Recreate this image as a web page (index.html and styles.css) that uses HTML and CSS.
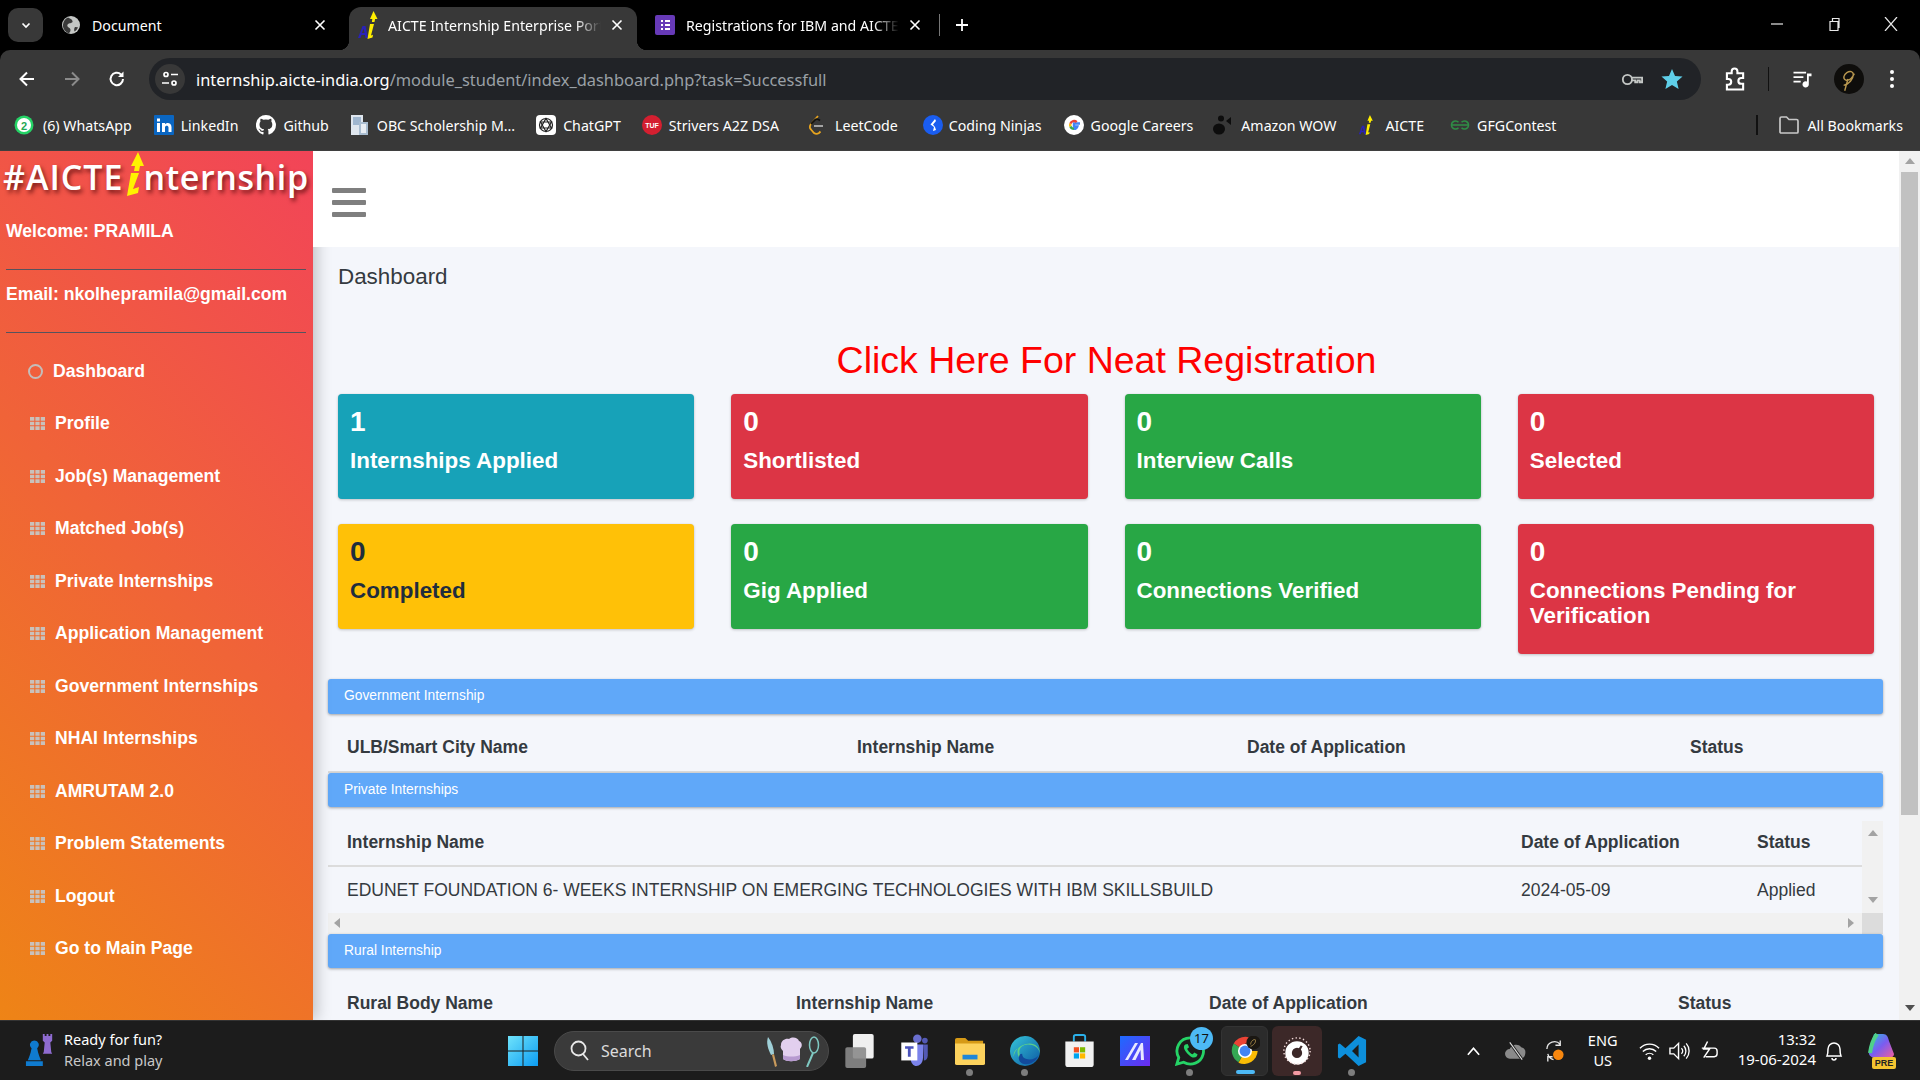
FILE: index.html
```html
<!DOCTYPE html>
<html lang="en">
<head>
<meta charset="utf-8">
<title>AICTE Internship Enterprise Portal</title>
<link rel="stylesheet" href="styles.css">
</head>
<body>
<svg class="defs" width="0" height="0" aria-hidden="true">
  <symbol id="th" viewBox="0 0 14 12"><path d="M0 0h4v3.400H0zM5 0h4v3.400H5zM10 0h4v3.400h-4zM0 4.300h4v3.400H0zM5 4.300h4v3.400H5zM10 4.300h4v3.400h-4zM0 8.600h4V12H0zM5 8.600h4V12H5zM10 8.600h4V12h-4z"/></symbol>
  <symbol id="ai" viewBox="0 0 20 28"><path d="M0 27 4.500 15h3L10 27H7.500l-.6-3H3.500l-1 3zM4 22h2.500L5.500 17.500z" fill="#2a22b8"/><path d="M15.500 0l4 8h-2.400l-.6 3h-2.600l.4-3H12zM12 13h4l-3 11.500 2-.7-.5 2.700-5 1.500z" fill="#ffee00"/></symbol>
  <symbol id="x" viewBox="0 0 12 12"><path d="M1.500 1.500l9 9M10.500 1.500l-9 9" fill="none" stroke="currentColor" stroke-width="1.600"/></symbol>
</svg>

<div class="browser">
  <div class="tabstrip">
    <button class="tab-search"><svg width="12" height="12" viewBox="0 0 12 12"><path d="M2.500 4.500 6 8l3.500-3.500" fill="none" stroke="#fff" stroke-width="1.700"/></svg></button>
    <div class="tab tab-doc">
      <svg class="tab-icon" viewBox="0 0 20 20"><circle cx="10" cy="10" r="9" fill="#c4c7c5"/><path d="M7 2.500c2 1 4 1.500 4.500 3.500s-2 2-3.500 2.500-2.500 2-1 3.500 2.500 1 2.500 3-1 2-1.500 3.500C4 17 1.500 13 2 9.500 2.500 6 4.500 3.500 7 2.500zM14 12c1 0 2 .5 3 0-.5 2-2 3.500-3.500 4.500-.5-1-.5-3.500.5-4.500z" fill="#3a3a3a"/></svg>
      <span class="tab-title">Document</span>
      <svg class="tab-x"><use href="#x"/></svg>
    </div>
    <div class="tab tab-active">
      <svg class="tab-icon tab-icon-ai"><use href="#ai"/></svg>
      <span class="tab-title tab-fade">AICTE Internship Enterprise Port</span>
      <svg class="tab-x"><use href="#x"/></svg>
    </div>
    <div class="tab tab-forms">
      <svg class="tab-icon" viewBox="0 0 20 20"><rect width="20" height="20" rx="2" fill="#673ab7"/><path d="M6 5h2v2H6zM10 5h5v2h-5zM6 9h2v2H6zM10 9h5v2h-5zM6 13h2v2H6zM10 13h5v2h-5z" fill="#fff"/></svg>
      <span class="tab-title tab-fade">Registrations for IBM and AICTE</span>
      <svg class="tab-x"><use href="#x"/></svg>
    </div>
    <span class="tab-sep"></span>
    <svg class="tab-plus" viewBox="0 0 14 14"><path d="M7 1v12M1 7h12" stroke="#fff" stroke-width="1.800"/></svg>
    <div class="win-ctrls">
      <svg viewBox="0 0 14 14"><path d="M1 7h12" stroke="#e8e8e8" stroke-width="1.200"/></svg>
      <svg viewBox="0 0 14 14"><path d="M3 4.500h8v9H3zM5.500 4.500V1.500h6.500v9H11" fill="none" stroke="#e8e8e8" stroke-width="1.200"/></svg>
      <svg viewBox="0 0 14 14"><path d="M1 0l12 14M13 0 1 14" stroke="#e8e8e8" stroke-width="1.200"/></svg>
    </div>
  </div>

  <div class="toolbar">
    <svg class="nav-ico" viewBox="0 0 20 20"><path d="M17 10H4M10 3.500 3.500 10l6.500 6.500" fill="none" stroke="#fff" stroke-width="2"/></svg>
    <svg class="nav-ico" viewBox="0 0 20 20"><path d="M3 10h13M10 3.500l6.500 6.500-6.500 6.500" fill="none" stroke="#8a8a8a" stroke-width="2"/></svg>
    <svg class="nav-ico" viewBox="0 0 20 20"><path d="M16 10a6.200 6.200 0 1 1-2-4.600" fill="none" stroke="#fff" stroke-width="2"/><path d="M16.500 2.500v5.500H11z" fill="#fff"/></svg>
    <div class="omnibox">
      <span class="site-info"><svg width="18" height="18" viewBox="0 0 18 18"><g fill="none" stroke="#fff" stroke-width="1.700"><circle cx="5" cy="4.500" r="2"/><path d="M10 4.500h7M1 13h7"/><circle cx="13" cy="13" r="2"/></g></svg></span>
      <span class="url"><span class="url-host">internship.aicte-india.org</span>/module_student/index_dashboard.php?task=Successfull</span>
      <svg class="omni-key" viewBox="0 0 24 14"><g fill="none" stroke="#c4c7c5" stroke-width="2"><circle cx="7" cy="7" r="5"/><path d="M12 5h11v5h-2.500V8H18v2h-2.500V8H12"/></g></svg>
      <svg class="omni-star" viewBox="0 0 24 24"><path d="M12 1l3.300 7.600 8.200.8-6.200 5.400 1.900 8.100L12 18.600l-7.200 4.300 1.900-8.100L.5 9.400l8.200-.8z" fill="#5fcfe9"/></svg>
    </div>
    <svg class="tb-ext" viewBox="0 0 22 24"><path d="M2 6h5V4a3 3 0 0 1 6 0v2h6v5h-2a3 3 0 0 0 0 6h2v6H2v-5h1.500a3 3 0 0 0 0-6H2z" fill="none" stroke="#fff" stroke-width="2.200"/></svg>
    <span class="tb-sep"></span>
    <svg class="tb-media" viewBox="0 0 22 20"><path d="M1 2h14v2H1zM1 7h11v2H1zM1 12h8v2H1zM16 4h5v3h-3v9a3.500 3.500 0 1 1-2-3.200z" fill="#fff"/></svg>
    <svg class="tb-avatar" viewBox="0 0 28 28"><circle cx="14" cy="14" r="14" fill="#0e0d0b"/><path d="M9 20c5-1 9-6 9-10 0-3-3-4-6-2s-4 6-1 7 6-2 8-6M13 14l-3 11" fill="none" stroke="#b8974f" stroke-width="1.300"/></svg>
    <svg class="tb-dots" viewBox="0 0 4 18"><circle cx="2" cy="2" r="2" fill="#fff"/><circle cx="2" cy="9" r="2" fill="#fff"/><circle cx="2" cy="16" r="2" fill="#fff"/></svg>
  </div>

  <div class="bookmarks">
    <a class="bm bm-wa"><svg viewBox="0 0 20 20"><circle cx="10" cy="10" r="9.500" fill="#25d366"/><circle cx="10" cy="10" r="7" fill="#fff"/><text x="10" y="14.500" class="bm-num">2</text></svg>(6) WhatsApp</a>
    <a class="bm bm-li"><svg viewBox="0 0 20 20"><rect width="20" height="20" rx="1" fill="#0a66c2"/><path d="M3 8h3v9H3zM3 3.500h3v3H3zM8 8h3v1.300c1-2 6.500-2.500 6.500 2.700v5h-3v-4.500c0-2.500-3.500-2.500-3.500 0V17H8z" fill="#fff"/></svg>LinkedIn</a>
    <a class="bm bm-gh"><svg viewBox="0 0 20 20"><path d="M10 0a10 10 0 0 0-3.200 19.500c.5.100.7-.2.700-.5v-2c-2.800.6-3.400-1.200-3.400-1.200-.4-1.100-1.100-1.500-1.100-1.500-.9-.6.100-.6.100-.6 1 .1 1.500 1 1.500 1 .9 1.500 2.300 1.100 2.900.8.100-.6.300-1.100.6-1.300-2.200-.3-4.600-1.100-4.600-5 0-1.100.4-2 1-2.700-.1-.3-.4-1.300.1-2.700 0 0 .8-.3 2.800 1a9.500 9.500 0 0 1 5 0c1.900-1.300 2.800-1 2.800-1 .5 1.400.2 2.400.1 2.700.6.700 1 1.600 1 2.700 0 3.900-2.300 4.700-4.600 5 .4.300.7.900.7 1.900V19c0 .3.200.6.700.5A10 10 0 0 0 10 0z" fill="#fff"/></svg>Github</a>
    <a class="bm bm-obc"><svg viewBox="0 0 20 20"><path d="M1 0h12v20H1z" fill="#dfe6ee"/><path d="M3 2h8v8H3z" fill="#9fb6cf"/><path d="M9 7h9v13H9z" fill="#a9bdd1"/><path d="M11 9h5v9h-5z" fill="#e9eef4"/></svg>OBC Scholership M...</a>
    <a class="bm bm-gpt"><svg viewBox="0 0 20 20"><rect width="20" height="20" rx="4" fill="#fff"/><g fill="none" stroke="#222" stroke-width="1.200"><circle cx="10" cy="10" r="6.500"/><path d="M10 3.500 15.500 13 4.500 13zM10 16.500 4.500 7h11z"/></g></svg>ChatGPT</a>
    <a class="bm bm-tuf"><svg viewBox="0 0 20 20"><circle cx="10" cy="10" r="10" fill="#d41f30"/><text x="10" y="12.800" class="bm-tuf-t">TUF</text></svg>Strivers A2Z DSA</a>
    <a class="bm bm-lc"><svg viewBox="0 0 20 20"><path d="M12 1 5 9c-1.500 2-1.500 4 0 5.500l3 3.500c1.500 1 3.500 1 5 0l1.500-1.500" fill="none" stroke="#e7a41f" stroke-width="1.800"/><path d="M8 11h9" stroke="#b0b0b0" stroke-width="1.800"/><path d="M5 9l4-4c1-1 3-1 5 .5" fill="none" stroke="#111" stroke-width="1.800"/></svg>LeetCode</a>
    <a class="bm bm-cn"><svg viewBox="0 0 20 20"><circle cx="10" cy="10" r="10" fill="#1a5df0"/><path d="M12 4 7.500 9.500 11 12l-1 4 3-1-1-3-2-2.500L13 6z" fill="#fff"/></svg>Coding Ninjas</a>
    <a class="bm bm-goog"><svg viewBox="0 0 20 20"><circle cx="10" cy="10" r="10" fill="#fff"/><path d="M16 8.500h-6v3h3.300c-.5 1.500-1.800 2.300-3.300 2.300" fill="none" stroke="#4285f4" stroke-width="2.400"/><path d="M10 13.800A3.800 3.800 0 0 1 6.400 11.300" fill="none" stroke="#34a853" stroke-width="2.400"/><path d="M6.400 11.300a3.900 3.900 0 0 1 0-2.600" fill="none" stroke="#fbbc05" stroke-width="2.400"/><path d="M6.400 8.700A3.800 3.800 0 0 1 12.700 7.200" fill="none" stroke="#ea4335" stroke-width="2.400"/></svg>Google Careers</a>
    <a class="bm bm-amz"><svg viewBox="0 0 20 20"><ellipse cx="7" cy="14" rx="6" ry="5.500" fill="#0d0d0d"/><circle cx="9" cy="3.500" r="3" fill="#0d0d0d"/><path d="M19 2v8l-5-4z" fill="#0d0d0d"/></svg>Amazon WOW</a>
    <a class="bm bm-aicte"><svg><use href="#ai"/></svg>AICTE</a>
    <a class="bm bm-gfg"><svg viewBox="0 0 20 12"><g fill="none" stroke="#2f8d46" stroke-width="1.500"><path d="M10 6H1.500a4 4 0 0 1 7-2.700M10 6h8.500a4 4 0 0 0-7-2.700M8.500 8.700A4 4 0 0 1 1.500 6M11.500 8.700A4 4 0 0 0 18.500 6"/></g></svg>GFGContest</a>
    <span class="bm-sep"></span>
    <a class="bm bm-all"><svg viewBox="0 0 20 18"><path d="M1 16V2.500C1 1.700 1.700 1 2.500 1h5l2.500 2.500h7.500c.8 0 1.500.7 1.500 1.500v11c0 .6-.5 1-1 1H2c-.5 0-1-.4-1-1z" fill="none" stroke="#c7c7c7" stroke-width="1.700"/></svg>All Bookmarks</a>
  </div>
</div>

<div class="viewport">
  <aside class="sidebar">
    <div class="logo">#AICTE<svg class="logo-i" viewBox="0 0 20 44"><path d="M13 0l6 14h-4l-1 5H9l1-5H6zM6 21h8L8 37l6-2-1 6-11 3z" fill="#fff200"/></svg><span class="logo-rest">nternship</span></div>
    <p class="user-line user-welcome">Welcome: PRAMILA</p>
    <hr class="user-rule">
    <p class="user-line">Email: nkolhepramila@gmail.com</p>
    <hr class="user-rule">
    <nav class="menu">
      <a class="menu-item"><span class="menu-ring"></span>Dashboard</a>
      <a class="menu-item"><svg class="menu-ico"><use href="#th"/></svg>Profile</a>
      <a class="menu-item"><svg class="menu-ico"><use href="#th"/></svg>Job(s) Management</a>
      <a class="menu-item"><svg class="menu-ico"><use href="#th"/></svg>Matched Job(s)</a>
      <a class="menu-item"><svg class="menu-ico"><use href="#th"/></svg>Private Internships</a>
      <a class="menu-item"><svg class="menu-ico"><use href="#th"/></svg>Application Management</a>
      <a class="menu-item"><svg class="menu-ico"><use href="#th"/></svg>Government Internships</a>
      <a class="menu-item"><svg class="menu-ico"><use href="#th"/></svg>NHAI Internships</a>
      <a class="menu-item"><svg class="menu-ico"><use href="#th"/></svg>AMRUTAM 2.0</a>
      <a class="menu-item"><svg class="menu-ico"><use href="#th"/></svg>Problem Statements</a>
      <a class="menu-item"><svg class="menu-ico"><use href="#th"/></svg>Logout</a>
      <a class="menu-item"><svg class="menu-ico"><use href="#th"/></svg>Go to Main Page</a>
    </nav>
  </aside>

  <main class="main">
    <header class="topbar">
      <span class="burger"><i></i><i></i><i></i></span>
    </header>
    <div class="content">
      <h1 class="page-title">Dashboard</h1>
      <h2 class="neat-link">Click Here For Neat Registration</h2>
      <div class="cards">
        <div class="card card-info"><h3>1</h3><p>Internships Applied</p></div>
        <div class="card card-danger"><h3>0</h3><p>Shortlisted</p></div>
        <div class="card card-success"><h3>0</h3><p>Interview Calls</p></div>
        <div class="card card-danger"><h3>0</h3><p>Selected</p></div>
        <div class="card card-warning"><h3>0</h3><p>Completed</p></div>
        <div class="card card-success"><h3>0</h3><p>Gig Applied</p></div>
        <div class="card card-success"><h3>0</h3><p>Connections Verified</p></div>
        <div class="card card-danger"><h3>0</h3><p>Connections Pending for Verification</p></div>
      </div>

      <section class="panel">
        <div class="panel-bar panel-bar-first">Government Internship</div>
        <div class="t-row t-head t-gov"><span>ULB/Smart City Name</span><span>Internship Name</span><span>Date of Application</span><span>Status</span></div>
      </section>

      <section class="panel">
        <div class="panel-bar">Private Internships</div>
        <div class="scrollbox">
          <div class="scroll-area">
            <div class="t-row t-head t-private t-private-head"><span>Internship Name</span><span>Date of Application</span><span>Status</span></div>
            <div class="t-row t-private t-cell"><span>EDUNET FOUNDATION 6- WEEKS INTERNSHIP ON EMERGING TECHNOLOGIES WITH IBM SKILLSBUILD</span><span>2024-05-09</span><span>Applied</span></div>
          </div>
          <div class="vbar"><i class="arr arr-up"></i><i class="arr arr-down"></i></div>
          <div class="hbar"><i class="arr arr-left"></i><i class="arr arr-right"></i></div>
          <div class="corner"></div>
        </div>
      </section>

      <section class="panel">
        <div class="panel-bar">Rural Internship</div>
        <div class="t-row t-head t-rural"><span>Rural Body Name</span><span>Internship Name</span><span>Date of Application</span><span>Status</span></div>
      </section>
    </div>
  </main>

  <div class="page-scroll">
    <i class="arr arr-up arr-page"></i>
    <span class="page-thumb"></span>
    <i class="arr arr-down arr-page arr-dark"></i>
  </div>
</div>

<footer class="taskbar">
  <div class="widget">
    <svg class="widget-ico" viewBox="0 0 32 36"><path d="M10 8a4.500 4.500 0 0 1 3 8c1 6 3 10 4 13H3c1-3 3-7 4-13a4.500 4.500 0 0 1 3-8zM1 30h18v5H1z" fill="#0f7bd0"/><path d="M19 1h2v2h2V1h2v2h2V1h2v7l-2 2 1 10 1 2H19l1-2 1-10-2-2z" fill="#8e6bd0"/></svg>
    <div class="widget-text"><span>Ready for fun?</span><span class="widget-sub">Relax and play</span></div>
  </div>

  <div class="tasks">
    <div class="slot slot-start"><svg viewBox="0 0 30 30" class="ico-30"><defs><linearGradient id="w" x1="0" y1="0" x2="1" y2="1"><stop offset="0" stop-color="#6fe3fb"/><stop offset="1" stop-color="#0c9cf2"/></linearGradient></defs><path d="M0 0h14.500v14.500H0zM15.500 0H30v14.500H15.500zM0 15.500h14.500V30H0zM15.500 15.500H30V30H15.500z" fill="url(#w)"/></svg></div>
    <div class="search">
      <svg width="20" height="22" viewBox="0 0 20 22"><circle cx="8.500" cy="8.500" r="7" fill="none" stroke="#e8e8e8" stroke-width="1.800"/><path d="M13 14l5 6" stroke="#e8e8e8" stroke-width="1.800"/></svg>
      <span class="search-label">Search</span>
      <svg class="search-art" viewBox="0 0 54 32"><path d="M2 2c4 5 6 12 6 17l-3 1C2 14 0 8 2 2z" fill="#9fd0d8"/><path d="M6 20l2-1 3 12-2 1z" fill="#c99a5c"/><path d="M15 10c0-5 5-7 8-6 4-3 9-1 10 2 3 1 4 5 1 8v10c-5 3-13 3-17 0V16c-2-2-3-4-2-6z" fill="#e2cfee"/><path d="M17 20c5 2 12 2 17 0v4c-5 3-13 3-17 0z" fill="#b79ad0"/><ellipse cx="48" cy="10" rx="4.500" ry="8" fill="none" stroke="#7fc9c2" stroke-width="1.500"/><path d="M47 18 41 32" stroke="#7fc9c2" stroke-width="2"/></svg>
    </div>
    <div class="slot"><svg viewBox="0 0 30 36" class="ico-taskview"><rect x="8" y="0" width="22" height="26" rx="2" fill="#f0f0f0"/><rect x="0" y="14" width="22" height="22" rx="2" fill="#8a8a8a" fill-opacity=".9"/></svg></div>
    <div class="slot"><svg viewBox="0 0 28 36" class="ico-teams"><circle cx="17" cy="5" r="4.500" fill="#6a6fd0"/><circle cx="25" cy="7" r="3" fill="#5359b5"/><path d="M10 11h13v14c0 6-4 9-7 9s-6-3-6-8z" fill="#7b83eb"/><path d="M23 11h5v12c0 3-2 5-4 5z" fill="#5359b5"/><rect x="0" y="9" width="17" height="19" fill="#fff"/><path d="M4 13h9v2.500H10V24H7v-8.500H4z" fill="#4b53bc"/></svg></div>
    <div class="slot slot-dot"><svg viewBox="0 0 32 30" class="ico-30"><path d="M0 3a2 2 0 0 1 2-2h9l3 3h16v6H0z" fill="#d69a16"/><path d="M0 7h32v21a2 2 0 0 1-2 2H2a2 2 0 0 1-2-2z" fill="#fcd25d"/><rect x="8" y="19" width="16" height="5" fill="#1c86d8"/></svg></div>
    <div class="slot slot-dot"><svg viewBox="0 0 32 32" class="ico-30"><defs><linearGradient id="e" x1="0" y1="0" x2="1" y2="1"><stop offset="0" stop-color="#36c6d8"/><stop offset="1" stop-color="#0c59a4"/></linearGradient></defs><circle cx="16" cy="16" r="16" fill="url(#e)"/><path d="M32 19c-1-7-7-10-13-10-5 0-9 3-9 8 0 6 6 10 13 9-8 3-15-2-15-9 0-2 .5-3 1-4-3 1-6 5-5 9 1-8 9-14 17-14 6 0 11 4 11 11z" fill="#6ce07a" fill-opacity=".8"/><path d="M13 19c0 4 3 6 8 6 4 0 7-2 9-4-2 6-8 9-13 9-6 0-9-5-7-9 0-1 1-2 3-2z" fill="#124a9c"/></svg></div>
    <div class="slot"><svg viewBox="0 0 30 36" class="ico-store"><path d="M9 8V3a2 2 0 0 1 2-2h8a2 2 0 0 1 2 2v5" fill="none" stroke="#2ab0ea" stroke-width="2"/><path d="M0 8h30v24a3 3 0 0 1-3 3H3a3 3 0 0 1-3-3z" fill="#f1f1f1"/><path d="M9 14h5.500v5.500H9z" fill="#f25022"/><path d="M15.500 14H21v5.500h-5.500z" fill="#7fba00"/><path d="M9 20.500h5.500V26H9z" fill="#00a4ef"/><path d="M15.500 20.500H21V26h-5.500z" fill="#ffb900"/></svg></div>
    <div class="slot"><svg viewBox="0 0 30 30" class="ico-30"><defs><linearGradient id="m" x1="0" y1="0" x2="1" y2="1"><stop offset="0" stop-color="#1d6bff"/><stop offset="1" stop-color="#6d2bf0"/></linearGradient></defs><rect width="30" height="30" fill="url(#m)"/><path d="M5 24 15 7h3L8 24zM12 24l9-17h2l1 17h-3l-.5-10-5 10z" fill="#e9e9ff"/></svg></div>
    <div class="slot slot-dot"><svg viewBox="0 0 32 32" class="ico-30"><path d="M16 2a14 14 0 0 0-12 21L2 30l7.200-2A14 14 0 1 0 16 2z" fill="none" stroke="#25d366" stroke-width="3"/><path d="M11 9c-2 1-2 4 0 7s6 7 9 7 4-2 4-3.500l-3.500-2-1.500 2c-2-.5-5-3.500-6-6l2-1.500-1.500-3.500z" fill="#25d366"/></svg><span class="wa-badge">17</span></div>
    <div class="slot slot-chrome"><svg viewBox="0 0 32 32" class="ico-30"><path d="M16 16 4 8a14.500 14.500 0 0 1 25 0H16z" fill="#ea4335"/><path d="M16 16 9 28A14.500 14.500 0 0 1 4 8z" fill="#34a853"/><path d="M16 16h13.500A14.500 14.500 0 0 1 9 28.500z" fill="#fbbc05"/><circle cx="16" cy="16" r="7.500" fill="#fff"/><circle cx="16" cy="16" r="5.800" fill="#4285f4"/><circle cx="25" cy="7" r="7.500" fill="#1a1712"/><path d="M22 11c3-1 6-4 5-7-2-1-5 2-5 5" fill="none" stroke="#a78a4a" stroke-width="1"/></svg><span class="run-bar"></span></div>
    <div class="slot slot-dial"><svg viewBox="0 0 32 32" class="ico-30"><circle cx="16" cy="18" r="9" fill="none" stroke="#fff" stroke-width="7"/><path d="M16 16l4-6 2 1-4 7z" fill="#3c2828"/><circle cx="16" cy="16" r="14" fill="none" stroke="#f2d9d9" stroke-width="1.500" stroke-dasharray="1.500 2.500"/></svg><span class="run-pink"></span></div>
    <div class="slot slot-dot"><svg viewBox="0 0 30 32" class="ico-30"><path d="M22 0l8 4v24l-8 4-14-13-6 5-2-1V9l2-1 6 5zm0 9-7 7 7 7z" fill="#0d8fdb"/></svg></div>
  </div>

  <div class="tray">
    <svg class="tray-caret" viewBox="0 0 16 10"><path d="M2 9l6-7 6 7" fill="none" stroke="#fff" stroke-width="1.800"/></svg>
    <svg class="tray-cloud" viewBox="0 0 22 18"><path d="M5 17a5 5 0 0 1 0-10c1-4 8-7 12-2 4 1 5 4 4 8-.5 2-2 4-4 4z" fill="#8a8a8a"/><path d="M5 0l13 18" stroke="#1c1c1c" stroke-width="3"/><path d="M5 0l13 18" stroke="#e0e0e0" stroke-width="1.100"/></svg>
    <svg class="tray-sync" viewBox="0 0 22 24"><path d="M3 10a8 8 0 0 1 14-5M17 1v5h-5M4 15a8 8 0 0 0 6 6M4 23v-5h5" fill="none" stroke="#e8e8e8" stroke-width="1.400"/><circle cx="15" cy="16" r="5.500" fill="#f7870f"/></svg>
    <div class="tray-lang"><span>ENG</span><span>US</span></div>
    <svg class="tray-wifi" viewBox="0 0 22 20"><g fill="none" stroke="#fff" stroke-width="1.500"><path d="M1 7a14 14 0 0 1 20 0M4 10.500a10 10 0 0 1 14 0M7 14a6 6 0 0 1 8 0"/></g><circle cx="11" cy="17.500" r="1.800" fill="#fff"/></svg>
    <svg class="tray-vol" viewBox="0 0 22 20"><path d="M1 7h4l5-5v16l-5-5H1z" fill="none" stroke="#fff" stroke-width="1.500"/><path d="M13 7a4 4 0 0 1 0 6M15.500 4.500a8 8 0 0 1 0 11M18 2a12 12 0 0 1 0 16" fill="none" stroke="#fff" stroke-width="1.400"/></svg>
    <svg class="tray-batt" viewBox="0 0 22 22"><path d="M4 8h13a3 3 0 0 1 3 3v3a3 3 0 0 1-3 3H8M10 1 6 9h6l-6 9" fill="none" stroke="#fff" stroke-width="1.500"/></svg>
    <div class="tray-clock"><span>13:32</span><span>19-06-2024</span></div>
    <svg class="tray-bell" viewBox="0 0 18 22"><path d="M2 16c1-2 1-4 1-7a6 6 0 0 1 12 0c0 3 0 5 1 7zM7 18a2 2 0 0 0 4 0" fill="none" stroke="#fff" stroke-width="1.500"/></svg>
    <div class="copilot"><svg viewBox="0 0 30 28"><defs><linearGradient id="c" x1="0" y1="0" x2="1" y2="1"><stop offset="0" stop-color="#28c0e0"/><stop offset=".5" stop-color="#7a5cf0"/><stop offset="1" stop-color="#f35f9b"/></linearGradient></defs><path d="M8 1h9c4 0 5 3 6 7l5 13c0 2-2 4-5 4H10c-5 0-8-3-7-7z" fill="url(#c)"/><path d="M11 1c-3 4-6 12-7 19" stroke="#4fd08a" stroke-width="4" fill="none"/></svg><span class="pre">PRE</span></div>
  </div>
</footer>
</body>
</html>
```

FILE: styles.css
```css
* { box-sizing: border-box; }
html, body { margin: 0; height: 100%; overflow: hidden; }
body {
  display: flex;
  flex-direction: column;
  height: 1080px;
  font-family: "Liberation Sans", Arial, sans-serif;
  color: #212529;
  background: #000;
}
.defs { position: absolute; }

/* browser chrome */
.browser { flex: 0 0 151px; display: flex; flex-direction: column; font-family: "Noto Sans", sans-serif; color: #fff; border-bottom: 1px solid #3f3f3f; background: #000; }
.tabstrip { flex: 0 0 50px; display: flex; align-items: flex-end; background: #000; }
.tab-search { flex: 0 0 35px; height: 34px; margin: 0 0 8px 8px; padding: 0; border: 0; border-radius: 10px; background: #383838; display: flex; align-items: center; justify-content: center; }
.tab { height: 43px; min-width: 0; display: flex; align-items: center; position: relative; font-size: 14.200px; }
.tab-doc { flex: 0 0 306px; padding: 0 23px 7px 18px; }
.tab-active { flex: 0 0 288px; padding: 0 14px 7px 9px; background: #383838; border-radius: 12px 12px 0 0; }
.tab-active::before, .tab-active::after { content: ""; position: absolute; bottom: 0; width: 10px; height: 10px; }
.tab-active::before { left: -10px; background: radial-gradient(circle at 0 0, #000 10px, #383838 10.500px); }
.tab-active::after { right: -10px; background: radial-gradient(circle at 100% 0, #000 10px, #383838 10.500px); }
.tab-forms { flex: 0 0 296px; padding: 0 12px 7px 18px; }
.tab-icon { width: 20px; height: 20px; flex: 0 0 20px; margin-right: 11px; }
.tab-icon-ai { width: 20px; height: 28px; margin-right: 10px; }
.tab-title { flex: 1; min-width: 0; white-space: nowrap; overflow: hidden; }
.tab-fade { -webkit-mask-image: linear-gradient(to right, #000 88%, transparent 100%); mask-image: linear-gradient(to right, #000 88%, transparent 100%); }
.tab-x { flex: 0 0 12px; width: 12px; height: 12px; margin-left: 10px; color: #fff; }
.tab-sep { width: 1px; height: 22px; background: #777; margin: 0 0 14px 6px; }
.tab-plus { width: 14px; height: 14px; margin: 0 0 18px 15px; }
.win-ctrls { margin-left: auto; display: flex; gap: 43px; padding: 0 22px 19px 0; }
.win-ctrls svg { width: 14px; height: 14px; }

.toolbar { flex: 0 0 50px; display: flex; align-items: center; background: #383838; border-radius: 10px 10px 0 0; padding: 8px 0 0 17px; }
.nav-ico { width: 20px; height: 20px; margin-right: 25px; }
.nav-ico:nth-child(3) { margin-right: 22px; }
.omnibox { flex: 0 0 1552px; height: 42px; background: #212327; border-radius: 21px; display: flex; align-items: center; padding: 0 18px 0 6px; }
.site-info { width: 30px; height: 30px; border-radius: 50%; background: #383838; display: flex; align-items: center; justify-content: center; }
.url { flex: 1; margin-left: 11px; font-size: 16.400px; color: #9aa0a6; white-space: nowrap; }
.url-host { color: #fff; }
.omni-key { width: 22px; height: 13px; margin-right: 18px; }
.omni-star { width: 22px; height: 22px; }
.tb-ext { width: 21px; height: 24px; margin-left: 24px; }
.tb-sep { width: 1px; height: 24px; background: #111; margin-left: 22px; }
.tb-media { width: 21px; height: 18px; margin-left: 23px; }
.tb-avatar { width: 30px; height: 30px; margin-left: 21px; }
.tb-dots { width: 4px; height: 18px; margin-left: 26px; }

.bookmarks { flex: 1; display: flex; align-items: center; background: #383838; padding-left: 14px; font-size: 14.200px; white-space: nowrap; }
.bm { display: flex; align-items: center; gap: 7px; margin-right: 21px; }
.bm svg { width: 20px; height: 20px; flex: 0 0 20px; }
.bm-wa { gap: 9px; margin-right: 22px; }
.bm-li { margin-right: 18px; }
.bm-tuf { margin-right: 27px; }
.bm-lc { gap: 9px; margin-right: 25px; }
.bm-cn { gap: 6px; margin-right: 22px; }
.bm-goog { margin-right: 19px; }
.bm-amz { gap: 9px; margin-right: 20px; }
.bm-aicte { gap: 9px; margin-right: 26px; }
.bm-num { font: bold 11px "Liberation Sans", sans-serif; text-anchor: middle; fill: #25a855; }
.bm-tuf-t { font: bold 7px "Liberation Sans", sans-serif; text-anchor: middle; fill: #fff; }
.bm-sep { width: 2px; height: 20px; background: #111; margin-left: auto; }
.bm-all { gap: 9px; margin: 0 17px 0 21px; }

/* page */
.viewport { flex: 1; min-height: 0; display: flex; overflow: hidden; background: #f4f6fb; }
.sidebar { flex: 0 0 313px; position: relative; z-index: 1; background: linear-gradient(45deg, #ee8416, #f24458); box-shadow: 4px 0 14px rgba(0, 0, 0, .22); color: #fff; overflow: hidden; }
.logo { height: 64px; padding: 0 0 0 3px; display: flex; align-items: flex-start; font: 600 34px/52px "Open Sans", sans-serif; letter-spacing: 1px; color: #fff; text-shadow: 2px 3px 4px rgba(80, 10, 10, .75); white-space: nowrap; }
.logo-i { width: 22px; height: 44px; flex: 0 0 22px; margin: 1px -2px 0 0; }
.logo-rest { letter-spacing: .6px; }
.user-line { margin: 0; padding-left: 6px; font-size: 17.600px; font-weight: 700; line-height: 24px; }
.user-welcome { padding-top: 4px; }
.user-rule { margin: 26px 7px 12px 6px; border: 0; border-top: 1px solid #56535d; }
.menu { display: flex; flex-direction: column; margin-top: 11px; }
.menu-item { height: 52.500px; display: flex; align-items: center; padding-left: 30px; font-size: 17.600px; font-weight: 700; color: #fff; white-space: nowrap; }
.menu-ico { width: 15px; height: 13px; margin-right: 10px; fill: #c9c1bb; }
.menu-ring { width: 15px; height: 15px; margin: 0 10px 0 -2px; border: 2px solid #c4bdba; border-radius: 50%; }

.main { flex: 1; min-width: 0; overflow: hidden; display: flex; flex-direction: column; }
.topbar { flex: 0 0 96px; position: relative; z-index: 2; background: #fff; display: flex; align-items: center; padding: 6px 0 0 19px; }
.burger { display: flex; flex-direction: column; gap: 7px; width: 34px; }
.burger i { height: 5px; background: #7f7f7f; border-radius: 1px; }
.content { flex: 1; padding: 0 16px 0 15px; }
.page-title { margin: 0; padding: 15px 0 0 10px; font-size: 22.400px; font-weight: 400; line-height: 30px; color: #343a40; }
.neat-link { margin: 44px 0 0 0; text-align: center; font-size: 37.500px; font-weight: 400; line-height: 48px; color: #f00; padding-left: 2px; }
.cards { display: grid; grid-template-columns: repeat(4, 1fr); gap: 25px 37px; align-items: start; margin: 10px 9px 0 10px; }
.card { border-radius: 4px; padding: 10px 12px 26px; color: #fff; box-shadow: 0 0 1px rgba(0, 0, 0, .125), 0 1px 3px rgba(0, 0, 0, .2); }
.card h3 { margin: 0; font-size: 28px; font-weight: 700; line-height: 36px; }
.card p { margin: 8px 0 0; font-size: 22.400px; font-weight: 700; line-height: 25px; }
.card-info { background: #17a2b8; }
.card-danger { background: #dc3545; }
.card-success { background: #28a745; }
.card-warning { background: #ffc107; color: #1f2d3d; }

.panel { display: flex; flex-direction: column; }
.panel-bar { flex: 0 0 34.500px; background: #60a8f9; border-radius: 3px; padding: 0 0 1px 16px; display: flex; align-items: center; color: #fff; font-size: 13.800px; box-shadow: 0 1px 3px rgba(0, 0, 0, .35); }
.panel-bar-first { margin-top: 25px; }
.t-row { display: grid; align-items: center; padding-left: 19px; color: #343a40; font-size: 17.500px; }
.t-head { font-weight: 700; height: 59px; padding-top: 10px; border-bottom: 2px solid #dcdcdc; white-space: nowrap; }
.t-gov { grid-template-columns: 510px 390px 443px 1fr; }
.t-private { grid-template-columns: 1174px 236px 1fr; }
.t-rural { grid-template-columns: 449px 413px 469px 1fr; border-bottom: 0; padding-top: 11px; }
.t-private-head { height: 46px; padding-top: 0; }
.t-cell { height: 46px; padding-top: 2px; white-space: nowrap; }
.scrollbox { display: grid; grid-template-columns: 1fr 21px; grid-template-rows: 92px 21px; margin-top: 13.500px; }
.scroll-area { overflow: hidden; }
.vbar { background: #f1f1f1; display: flex; flex-direction: column; align-items: center; justify-content: space-between; padding: 9px 0 10px; }
.hbar { background: #f1f1f1; display: flex; align-items: center; justify-content: space-between; padding: 0 8px 0 6px; }
.corner { background: #dcdcdc; }
.arr { display: block; width: 0; height: 0; border-style: solid; border-color: transparent; }
.arr-up { border-width: 0 5px 6px; border-bottom-color: #a3a3a3; }
.arr-down { border-width: 6px 5px 0; border-top-color: #a3a3a3; }
.arr-left { border-width: 5px 6px 5px 0; border-right-color: #a3a3a3; }
.arr-right { border-width: 5px 0 5px 6px; border-left-color: #a3a3a3; }
.page-scroll { flex: 0 0 21px; background: #f1f1f1; display: flex; flex-direction: column; align-items: center; padding: 7px 0 9px; position: relative; z-index: 2; }
.page-thumb { width: 17px; height: 643px; margin-top: 8px; background: #c1c1c1; }
.arr-page { flex: 0 0 auto; }
.arr-dark { margin-top: auto; border-top-color: #505050; }

/* taskbar */
.taskbar { flex: 0 0 60px; display: flex; align-items: center; background: #1c1c1c; border-top: 1px solid #333; color: #fff; font-family: "Noto Sans", sans-serif; position: relative; }
.widget { flex: 0 0 495px; display: flex; align-items: center; padding: 0 0 2px 25px; }
.widget-ico { width: 30px; height: 34px; margin-right: 9px; }
.widget-text { display: flex; flex-direction: column; font-size: 14.500px; line-height: 21px; }
.widget-sub { color: #c8c8c8; }
.tasks { display: flex; align-items: center; height: 100%; }
.slot { flex: 0 0 55px; height: 48px; display: flex; align-items: center; justify-content: center; position: relative; border-radius: 6px; }
.slot-start { margin-right: 4px; }
.ico-30 { width: 30px; height: 30px; }
.ico-taskview { width: 29px; height: 34px; }
.ico-teams { width: 27px; height: 34px; }
.ico-store { width: 29px; height: 34px; }
.slot-dot::after { content: ""; position: absolute; left: 24px; bottom: -1px; width: 7px; height: 7px; border-radius: 50%; background: #7d7d7d; }
.search { flex: 0 0 275px; height: 40px; margin-right: 3px; border-radius: 20px; background: #3a3a3a; border: 1px solid #4a4a4a; display: flex; align-items: center; padding: 0 8px 0 15px; }
.search-label { flex: 1; margin-left: 11px; font-size: 16px; color: #dcdcdc; }
.search-art { width: 54px; height: 32px; }
.wa-badge { position: absolute; top: 0; left: 28px; width: 23px; height: 23px; border-radius: 50%; background: #4db9f5; color: #111; font-size: 13px; line-height: 23px; text-align: center; }
.slot-chrome { flex: 0 0 47px; height: 50px; margin: 0 4px; background: #2b2b2b; border: 1px solid #333; }
.slot-dial { flex: 0 0 50px; height: 50px; margin-right: 2px; background: #3c2828; }
.run-bar { position: absolute; left: 14px; bottom: 1px; width: 19px; height: 4px; border-radius: 2px; background: #4db9f5; }
.run-pink { position: absolute; left: 21px; bottom: 1px; width: 8px; height: 4px; border-radius: 2px; background: #f29aa3; }
.tray { margin-left: auto; display: flex; align-items: center; height: 100%; }
.tray-caret { width: 15px; height: 10px; margin-right: 24px; }
.tray-cloud { width: 21px; height: 18px; margin-right: 18px; }
.tray-sync { width: 21px; height: 24px; margin-right: 20px; }
.tray-lang { width: 36px; display: flex; flex-direction: column; align-items: center; font-size: 14.500px; line-height: 20px; margin: 0 18px 2px 0; }
.tray-wifi { width: 21px; height: 20px; margin-right: 9px; }
.tray-vol { width: 21px; height: 20px; margin-right: 8px; }
.tray-batt { width: 21px; height: 22px; margin-right: 19px; }
.tray-clock { display: flex; flex-direction: column; align-items: flex-end; font-size: 15px; line-height: 20px; margin: 0 9px 4px 0; }
.tray-bell { width: 18px; height: 22px; margin-right: 23px; }
.copilot { position: relative; width: 30px; height: 36px; margin-right: 24px; }
.copilot svg { width: 30px; height: 28px; }
.pre { position: absolute; left: 6px; bottom: 0; width: 24px; height: 12px; background: #f4c430; color: #222; font: bold 9px/12px "Liberation Sans", sans-serif; text-align: center; border-radius: 2px; }
```
